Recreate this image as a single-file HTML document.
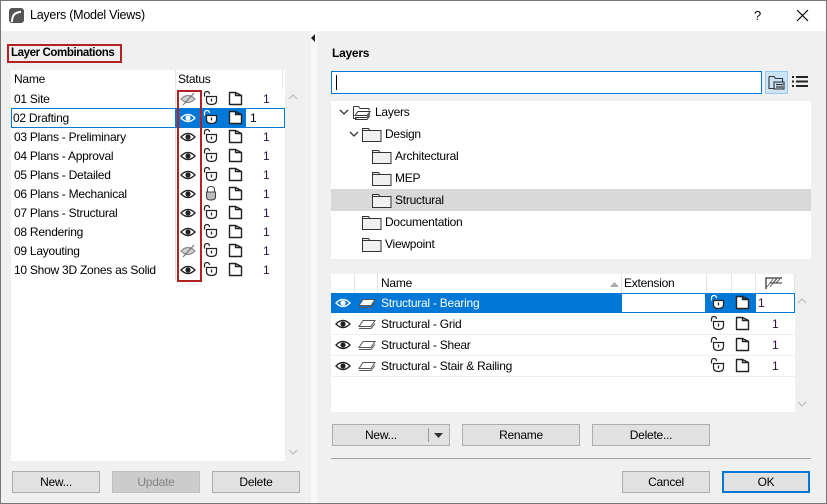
<!DOCTYPE html>
<html><head><meta charset="utf-8"><style>
*{margin:0;padding:0;box-sizing:border-box}
body{width:827px;height:504px;overflow:hidden;background:#f0f0f0;font-family:"Liberation Sans",sans-serif;font-size:12px;letter-spacing:-0.25px;color:#000;position:relative}
.a{position:absolute}
.t{position:absolute;white-space:nowrap;line-height:19px}
.btn{position:absolute;background:#e1e1e1;border:1px solid #adadad;text-align:center;line-height:20px;font-size:12px}
.n{color:#301040}
svg{position:absolute;overflow:visible}
</style></head><body>
<svg width="0" height="0" style="position:absolute">
<defs>
<g id="eye"><path d="M1 6 Q8 -1 15 6 Q8 13 1 6Z" fill="#fff" stroke="#222" stroke-width="1.3"/><circle cx="8" cy="6" r="2.6" fill="#222"/></g>
<g id="eyew"><path d="M1 6 Q8 -1 15 6 Q8 13 1 6Z" fill="#0078d7" stroke="#fff" stroke-width="1.3"/><circle cx="8" cy="6" r="2.6" fill="#fff"/></g>
<g id="eyeh"><path d="M1 6 Q8 -1 15 6 Q8 13 1 6Z" fill="#d0d0d0" stroke="#888" stroke-width="1.2"/><path d="M3 12 L14 0" stroke="#777" stroke-width="1.2"/></g>
<g id="lock"><path d="M1.5 5.5 V3 Q1.5 0.5 4 0.5 Q6.5 0.5 6.5 3" fill="none" stroke="#222" stroke-width="1.2"/><path d="M3.5 5.5 h10 v4 q0 4 -5 4 q-5 0 -5 -4z" fill="#fff" stroke="#222" stroke-width="1.2"/><path d="M8.5 7.5 v3" stroke="#222" stroke-width="1.3"/></g>
<g id="lockw"><path d="M1.5 5.5 V3 Q1.5 0.5 4 0.5 Q6.5 0.5 6.5 3" fill="none" stroke="#fff" stroke-width="1.2"/><path d="M3.5 5.5 h10 v4 q0 4 -5 4 q-5 0 -5 -4z" fill="#fff" stroke="#222" stroke-width="1.2"/><path d="M8.5 7.5 v3" stroke="#222" stroke-width="1.3"/></g>
<g id="lockc"><path d="M4.5 6 V3.5 Q4.5 0.5 8 0.5 Q11.5 0.5 11.5 3.5 V6" fill="none" stroke="#444" stroke-width="1.1"/><path d="M3.5 6 h9 v5 q0 3 -4.5 3 q-4.5 0 -4.5 -3z" fill="#bbb" stroke="#444" stroke-width="1.1"/></g>
<g id="page"><path d="M1.5 1.5 h6 v3 h6 v9 h-12z M7.5 1.5 l6 3" fill="#fff" stroke="#222" stroke-width="1.4" stroke-linejoin="round"/></g>
<g id="pagew"><path d="M1.5 1.5 h6 v3 h6 v9 h-12z M7.5 1.5 l6 3" fill="#fff" stroke="#222" stroke-width="1.4" stroke-linejoin="round"/></g>
<g id="fold"><path d="M0.5 2.5 h6 l1.5 2 h11 v11 h-18.5z M0.5 4.5 h7.5" fill="#f0f0f0" stroke="#333" stroke-width="1"/></g>
<g id="lay"><path d="M4 1.5 h12 l-4 6 h-12z" fill="#fff" stroke="#555" stroke-width="1"/><path d="M0 9.5 h12 l4 -5" fill="none" stroke="#555" stroke-width="1"/></g>
</defs></svg>

<!-- title bar -->
<div class="a" style="left:0;top:0;width:827px;height:31px;background:#fff;border:1px solid #777;border-bottom:none"></div>
<svg style="left:9px;top:8px" width="16" height="16"><rect x="0" y="0" width="15" height="15" rx="3" fill="#555"/><path d="M3 14 Q3 4 12 4" fill="none" stroke="#fff" stroke-width="2"/></svg>
<div class="t" style="left:30px;top:6px;font-size:12.5px">Layers (Model Views)</div>
<div class="t" style="left:754px;top:6px;font-size:13px">?</div>
<svg style="left:797px;top:10px" width="11" height="11"><path d="M0 0L11 11M11 0L0 11" stroke="#000" stroke-width="1.2"/></svg>
<div class="a" style="left:0;top:31px;width:1px;height:473px;background:#777"></div>
<div class="a" style="left:826px;top:31px;width:1px;height:473px;background:#777"></div>
<div class="a" style="left:0;top:503px;width:827px;height:1px;background:#777"></div>

<!-- splitter -->
<div class="a" style="left:311px;top:31px;width:6px;height:472px;background:#f8f8f8"></div>
<svg style="left:311px;top:34px" width="5" height="8"><path d="M4 0 L0 4 L4 8z" fill="#222"/></svg>

<!-- left -->
<div class="a" style="left:7px;top:44px;width:115px;height:19px;border:2px solid #b22222"></div>
<div class="t" style="left:11px;top:44px;font-weight:bold;font-size:11.5px;letter-spacing:-0.4px">Layer Combinations</div>
<div class="a" style="left:11px;top:70px;width:274px;height:391px;background:#fff"></div>
<div class="a" style="left:11px;top:70px;width:272px;height:19px;border-right:1px solid #e5e5e5"></div>
<div class="a" style="left:175px;top:70px;width:1px;height:19px;background:#e5e5e5"></div>
<div class="t" style="left:14px;top:70px">Name</div>
<div class="t" style="left:178px;top:70px">Status</div>
<div class="a" style="left:175px;top:90px;width:1px;height:190px;background:#ddd"></div>
<svg style="left:289px;top:94px" width="8" height="5"><path d="M0 5L4 1L8 5" fill="none" stroke="#bbb" stroke-width="1.2"/></svg>
<svg style="left:289px;top:450px" width="8" height="5"><path d="M0 0L4 4L8 0" fill="none" stroke="#bbb" stroke-width="1.2"/></svg>

<div class="a" style="left:175px;top:109px;width:71px;height:19px;background:#0078d7"></div>
<div class="a" style="left:11px;top:108px;width:274px;height:20px;border:1px solid #0078d7"></div>
<div class="a" style="left:247px;top:110px;width:37px;height:17px;background:#fff"></div>

<div class="t" style="left:14px;top:90px">01 Site</div>
<div class="t" style="left:13px;top:109px">02 Drafting</div>
<div class="t" style="left:14px;top:128px">03 Plans - Preliminary</div>
<div class="t" style="left:14px;top:147px">04 Plans - Approval</div>
<div class="t" style="left:14px;top:166px">05 Plans - Detailed</div>
<div class="t" style="left:14px;top:185px">06 Plans - Mechanical</div>
<div class="t" style="left:14px;top:204px">07 Plans - Structural</div>
<div class="t" style="left:14px;top:223px">08 Rendering</div>
<div class="t" style="left:14px;top:242px">09 Layouting</div>
<div class="t" style="left:14px;top:261px">10 Show 3D Zones as Solid</div>

<svg style="left:180px;top:93px" width="16" height="12"><use href="#eyeh"/></svg>
<svg style="left:180px;top:112px" width="16" height="12"><use href="#eyew"/></svg>
<svg style="left:180px;top:131px" width="16" height="12"><use href="#eye"/></svg>
<svg style="left:180px;top:150px" width="16" height="12"><use href="#eye"/></svg>
<svg style="left:180px;top:169px" width="16" height="12"><use href="#eye"/></svg>
<svg style="left:180px;top:188px" width="16" height="12"><use href="#eye"/></svg>
<svg style="left:180px;top:207px" width="16" height="12"><use href="#eye"/></svg>
<svg style="left:180px;top:226px" width="16" height="12"><use href="#eye"/></svg>
<svg style="left:180px;top:245px" width="16" height="12"><use href="#eyeh"/></svg>
<svg style="left:180px;top:264px" width="16" height="12"><use href="#eye"/></svg>

<svg style="left:203px;top:91px" width="15" height="15"><use href="#lock"/></svg>
<svg style="left:203px;top:110px" width="15" height="15"><use href="#lockw"/></svg>
<svg style="left:203px;top:129px" width="15" height="15"><use href="#lock"/></svg>
<svg style="left:203px;top:148px" width="15" height="15"><use href="#lock"/></svg>
<svg style="left:203px;top:167px" width="15" height="15"><use href="#lock"/></svg>
<svg style="left:203px;top:186px" width="15" height="15"><use href="#lockc"/></svg>
<svg style="left:203px;top:205px" width="15" height="15"><use href="#lock"/></svg>
<svg style="left:203px;top:224px" width="15" height="15"><use href="#lock"/></svg>
<svg style="left:203px;top:243px" width="15" height="15"><use href="#lock"/></svg>
<svg style="left:203px;top:262px" width="15" height="15"><use href="#lock"/></svg>

<svg style="left:228px;top:91px" width="15" height="15"><use href="#page"/></svg>
<svg style="left:228px;top:110px" width="15" height="15"><use href="#pagew"/></svg>
<svg style="left:228px;top:129px" width="15" height="15"><use href="#page"/></svg>
<svg style="left:228px;top:148px" width="15" height="15"><use href="#page"/></svg>
<svg style="left:228px;top:167px" width="15" height="15"><use href="#page"/></svg>
<svg style="left:228px;top:186px" width="15" height="15"><use href="#page"/></svg>
<svg style="left:228px;top:205px" width="15" height="15"><use href="#page"/></svg>
<svg style="left:228px;top:224px" width="15" height="15"><use href="#page"/></svg>
<svg style="left:228px;top:243px" width="15" height="15"><use href="#page"/></svg>
<svg style="left:228px;top:262px" width="15" height="15"><use href="#page"/></svg>

<div class="t n" style="left:263px;top:90px">1</div>
<div class="t" style="left:250px;top:109px">1</div>
<div class="t n" style="left:263px;top:128px">1</div>
<div class="t n" style="left:263px;top:147px">1</div>
<div class="t n" style="left:263px;top:166px">1</div>
<div class="t n" style="left:263px;top:185px">1</div>
<div class="t n" style="left:263px;top:204px">1</div>
<div class="t n" style="left:263px;top:223px">1</div>
<div class="t n" style="left:263px;top:242px">1</div>
<div class="t n" style="left:263px;top:261px">1</div>

<div class="a" style="left:177px;top:90px;width:25px;height:192px;border:2px solid #b22222"></div>

<div class="btn" style="left:12px;top:471px;width:88px;height:22px">New...</div>
<div class="btn" style="left:112px;top:471px;width:88px;height:22px;background:#ccc;border-color:#bfbfbf;color:#838383">Update</div>
<div class="btn" style="left:212px;top:471px;width:88px;height:22px">Delete</div>

<!-- right -->
<div class="t" style="left:332px;top:44px;font-weight:bold">Layers</div>
<div class="a" style="left:331px;top:71px;width:431px;height:23px;background:#fff;border:1px solid #0078d7"></div>
<div class="a" style="left:336px;top:75px;width:1px;height:15px;background:#000"></div>
<div class="a" style="left:765px;top:71px;width:23px;height:23px;background:#cce4f7;border:1px solid #99c9ef"></div>
<svg style="left:768px;top:75px" width="18" height="16"><path d="M1 1.5h5l1.5 2h7v3M1 1.5v12h5" fill="none" stroke="#333" stroke-width="1.1"/><rect x="6" y="7" width="10" height="7" fill="none" stroke="#333" stroke-width="1.1"/><path d="M8 9.5h7M8 12h7" stroke="#333" stroke-width="1.3"/></svg>
<svg style="left:792px;top:76px" width="17" height="12"><path d="M0 1h2M4 1h12M0 5.5h2M4 5.5h12M0 10h2M4 10h12" stroke="#222" stroke-width="2"/></svg>

<div class="a" style="left:331px;top:101px;width:480px;height:158px;background:#fff"></div>
<div class="a" style="left:331px;top:189px;width:480px;height:22px;background:#d9d9d9"></div>
<svg style="left:339px;top:109px" width="10" height="6"><path d="M1 1L5 5L9 1" fill="none" stroke="#333" stroke-width="1.3"/></svg>
<svg style="left:353px;top:104px" width="20" height="17"><path d="M0.5 2.5h5l1.5 2h9v2M0.5 2.5v12h3" fill="none" stroke="#333"/><path d="M5 7.5h12l-3 4h-12z M2 13.5h12l3-4 M2 15.5h12l3-4" fill="#fff" stroke="#333"/></svg>
<div class="t" style="left:375px;top:103px">Layers</div>
<svg style="left:349px;top:131px" width="10" height="6"><path d="M1 1L5 5L9 1" fill="none" stroke="#333" stroke-width="1.3"/></svg>
<svg style="left:362px;top:126px" width="20" height="17"><use href="#fold"/></svg>
<div class="t" style="left:385px;top:125px">Design</div>
<svg style="left:372px;top:148px" width="20" height="17"><use href="#fold"/></svg>
<div class="t" style="left:395px;top:147px">Architectural</div>
<svg style="left:372px;top:170px" width="20" height="17"><use href="#fold"/></svg>
<div class="t" style="left:395px;top:169px">MEP</div>
<svg style="left:372px;top:192px" width="20" height="17"><use href="#fold"/></svg>
<div class="t" style="left:395px;top:191px">Structural</div>
<svg style="left:362px;top:214px" width="20" height="17"><use href="#fold"/></svg>
<div class="t" style="left:385px;top:213px">Documentation</div>
<svg style="left:362px;top:236px" width="20" height="17"><use href="#fold"/></svg>
<div class="t" style="left:385px;top:235px">Viewpoint</div>

<!-- layer table -->
<div class="a" style="left:331px;top:274px;width:464px;height:138px;background:#fff"></div>
<div class="a" style="left:354px;top:274px;width:1px;height:19px;background:#e5e5e5"></div>
<div class="a" style="left:377px;top:274px;width:1px;height:19px;background:#e5e5e5"></div>
<div class="a" style="left:621px;top:274px;width:1px;height:19px;background:#e5e5e5"></div>
<div class="a" style="left:706px;top:274px;width:1px;height:19px;background:#e5e5e5"></div>
<div class="a" style="left:731px;top:274px;width:1px;height:19px;background:#e5e5e5"></div>
<div class="a" style="left:755px;top:274px;width:1px;height:19px;background:#e5e5e5"></div>
<div class="a" style="left:794px;top:274px;width:1px;height:19px;background:#e5e5e5"></div>
<div class="t" style="left:381px;top:274px">Name</div>
<svg style="left:610px;top:282px" width="9" height="5"><path d="M0 5L4.5 0L9 5z" fill="#aaa"/></svg>
<div class="t" style="left:624px;top:274px">Extension</div>
<svg style="left:765px;top:277px" width="18" height="12"><path d="M1 12V1h16" fill="none" stroke="#333" stroke-width="1.3"/><path d="M2 10l6-8M5 10l6-8M8 6l4-4M11 6l4-4" stroke="#666" stroke-width="1"/><path d="M5 6h12" stroke="#333"/></svg>
<svg style="left:798px;top:298px" width="8" height="5"><path d="M0 5L4 1L8 5" fill="none" stroke="#bbb" stroke-width="1.2"/></svg>
<svg style="left:798px;top:402px" width="8" height="5"><path d="M0 0L4 4L8 0" fill="none" stroke="#bbb" stroke-width="1.2"/></svg>

<div class="a" style="left:331px;top:293px;width:464px;height:20px;background:#0078d7"></div>
<div class="a" style="left:622px;top:294px;width:83px;height:18px;background:#fff"></div>
<div class="a" style="left:756px;top:294px;width:38px;height:18px;background:#fff"></div>
<div class="a" style="left:331px;top:334px;width:464px;height:1px;background:#eee"></div>
<div class="a" style="left:331px;top:355px;width:464px;height:1px;background:#eee"></div>
<div class="a" style="left:331px;top:376px;width:464px;height:1px;background:#eee"></div>

<svg style="left:335px;top:297px" width="16" height="12"><use href="#eyew"/></svg>
<svg style="left:335px;top:318px" width="16" height="12"><use href="#eye"/></svg>
<svg style="left:335px;top:339px" width="16" height="12"><use href="#eye"/></svg>
<svg style="left:335px;top:360px" width="16" height="12"><use href="#eye"/></svg>
<svg style="left:359px;top:298px" width="17" height="11"><use href="#lay"/></svg>
<svg style="left:359px;top:319px" width="17" height="11"><use href="#lay"/></svg>
<svg style="left:359px;top:340px" width="17" height="11"><use href="#lay"/></svg>
<svg style="left:359px;top:361px" width="17" height="11"><use href="#lay"/></svg>
<div class="t" style="left:381px;top:294px;color:#fff">Structural - Bearing</div>
<div class="t" style="left:381px;top:315px">Structural - Grid</div>
<div class="t" style="left:381px;top:336px">Structural - Shear</div>
<div class="t" style="left:381px;top:357px">Structural - Stair &amp; Railing</div>
<svg style="left:710px;top:295px" width="15" height="15"><use href="#lockw"/></svg>
<svg style="left:710px;top:316px" width="15" height="15"><use href="#lock"/></svg>
<svg style="left:710px;top:337px" width="15" height="15"><use href="#lock"/></svg>
<svg style="left:710px;top:358px" width="15" height="15"><use href="#lock"/></svg>
<svg style="left:735px;top:295px" width="15" height="15"><use href="#page"/></svg>
<svg style="left:735px;top:316px" width="15" height="15"><use href="#page"/></svg>
<svg style="left:735px;top:337px" width="15" height="15"><use href="#page"/></svg>
<svg style="left:735px;top:358px" width="15" height="15"><use href="#page"/></svg>
<div class="t n" style="left:758px;top:294px">1</div>
<div class="t n" style="left:772px;top:315px">1</div>
<div class="t n" style="left:772px;top:336px">1</div>
<div class="t n" style="left:772px;top:357px">1</div>

<div class="btn" style="left:332px;top:424px;width:118px;height:22px;text-align:left;padding-left:32px">New...</div>
<div class="a" style="left:428px;top:428px;width:1px;height:14px;background:#999"></div>
<svg style="left:434px;top:433px" width="9" height="5"><path d="M0 0h9L4.5 5z" fill="#333"/></svg>
<div class="btn" style="left:462px;top:424px;width:118px;height:22px">Rename</div>
<div class="btn" style="left:592px;top:424px;width:118px;height:22px">Delete...</div>
<div class="a" style="left:331px;top:458px;width:480px;height:1px;background:#a0a0a0"></div>
<div class="btn" style="left:622px;top:471px;width:88px;height:22px">Cancel</div>
<div class="btn" style="left:722px;top:471px;width:88px;height:22px;border:2px solid #0078d7;line-height:18px">OK</div>
</body></html>
